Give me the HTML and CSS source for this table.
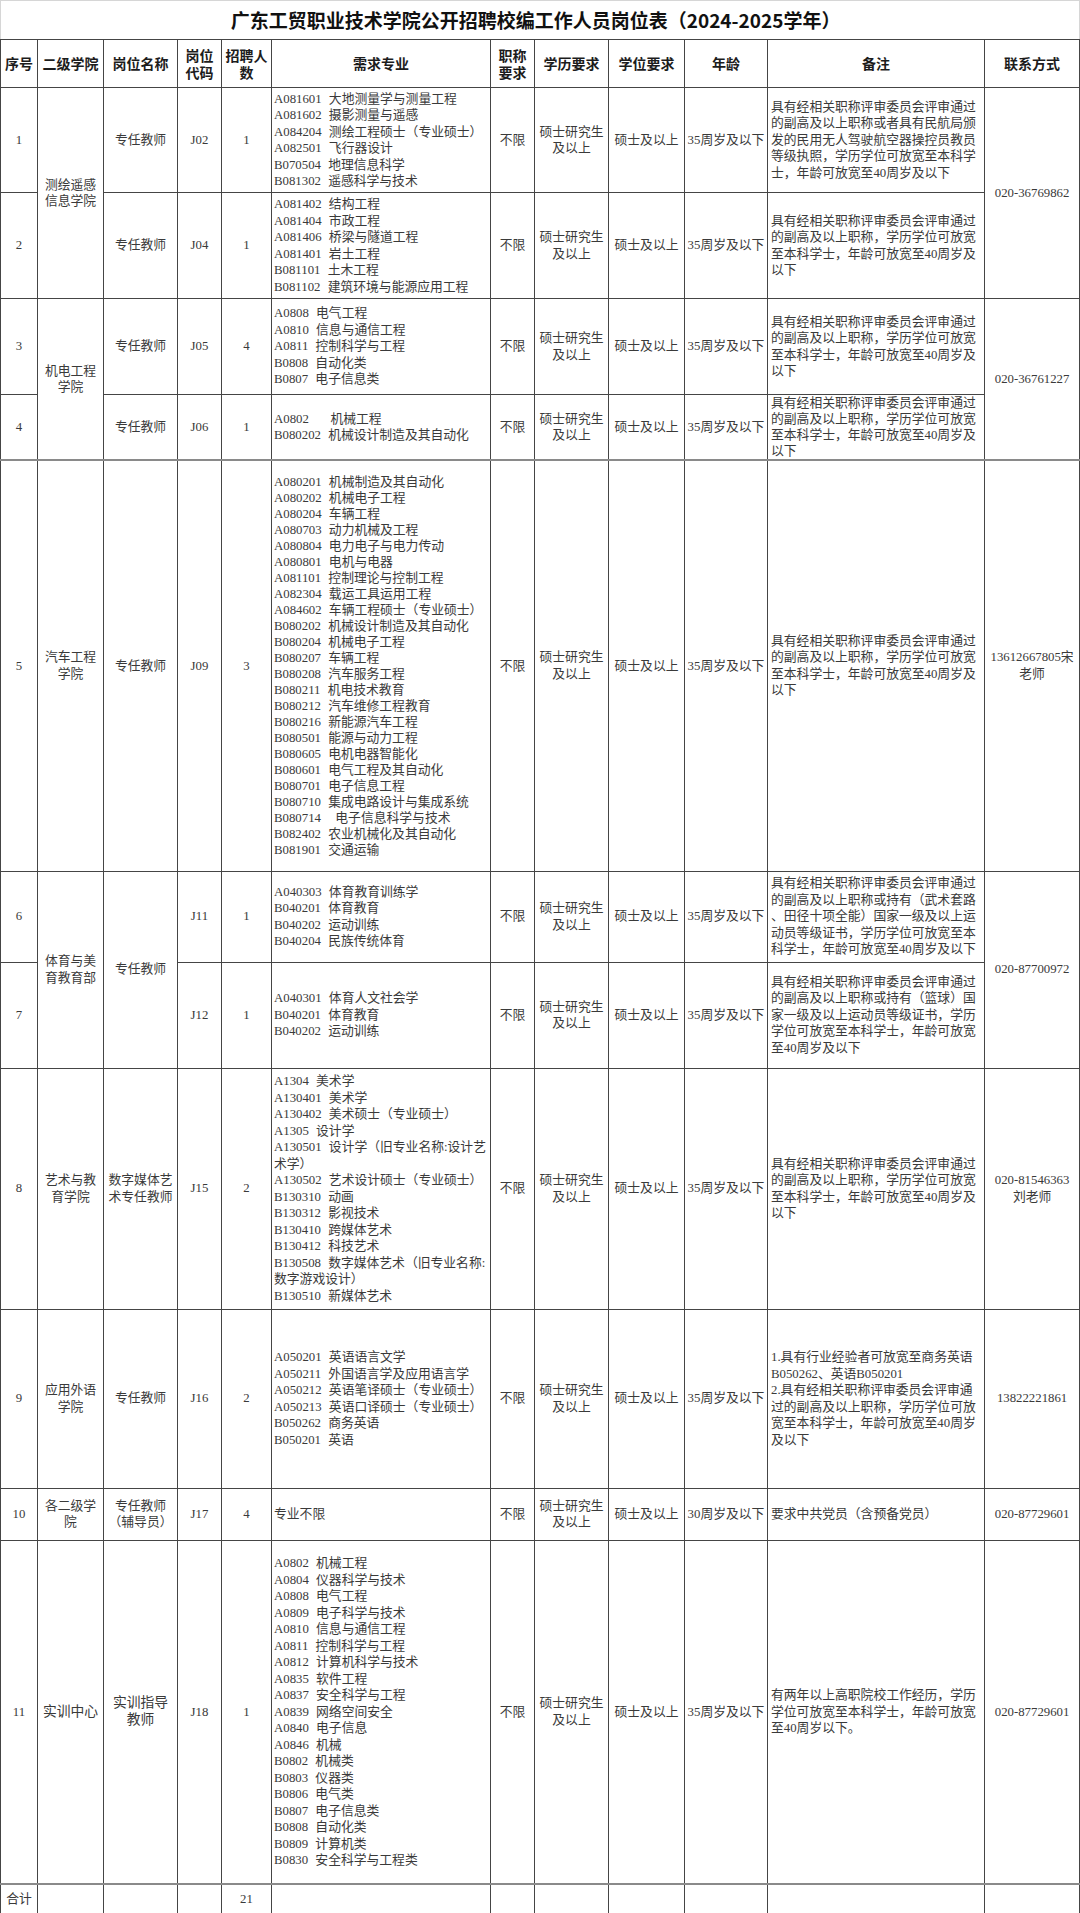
FILE: index.html
```html
<!DOCTYPE html>
<html lang="zh-CN">
<head>
<meta charset="utf-8">
<title>岗位表</title>
<link rel="stylesheet" href="styles.css">
</head>
<body>
<table class="sheet">
  <colgroup>
    <col class="w-no"><col class="w-dept"><col class="w-post"><col class="w-code"><col class="w-num"><col class="w-major"><col class="w-rank"><col class="w-edu"><col class="w-deg"><col class="w-age"><col class="w-note"><col class="w-tel">
  </colgroup>
  <thead>
    <tr class="h-title"><th colspan="12" class="title">广东工贸职业技术学院公开招聘校编工作人员岗位表（2024-2025学年）</th></tr>
    <tr class="h-head">
      <th>序号</th><th>二级学院</th><th>岗位名称</th><th>岗位<br>代码</th><th>招聘人<br>数</th><th>需求专业</th><th>职称<br>要求</th><th class="edu">学历要求</th><th>学位要求</th><th>年龄</th><th>备注</th><th>联系方式</th>
    </tr>
  </thead>
  <tbody>
    <tr class="h-r1">
      <td>1</td>
      <td rowspan="2">测绘遥感<br>信息学院</td>
      <td>专任教师</td><td>J02</td><td>1</td>
      <td class="list">A081601 大地测量学与测量工程<br>A081602 摄影测量与遥感<br>A084204 测绘工程硕士（专业硕士）<br>A082501 飞行器设计<br>B070504 地理信息科学<br>B081302 遥感科学与技术</td>
      <td>不限</td><td class="edu">硕士研究生<br>及以上</td><td>硕士及以上</td><td>35周岁及以下</td>
      <td class="note">具有经相关职称评审委员会评审通过<br>的副高及以上职称或者具有民航局颁<br>发的民用无人驾驶航空器操控员教员<br>等级执照，学历学位可放宽至本科学<br>士，年龄可放宽至40周岁及以下</td>
      <td rowspan="2">020-36769862</td>
    </tr>
    <tr class="h-r2">
      <td>2</td>
      <td>专任教师</td><td>J04</td><td>1</td>
      <td class="list">A081402 结构工程<br>A081404 市政工程<br>A081406 桥梁与隧道工程<br>A081401 岩土工程<br>B081101 土木工程<br>B081102 建筑环境与能源应用工程</td>
      <td>不限</td><td class="edu">硕士研究生<br>及以上</td><td>硕士及以上</td><td>35周岁及以下</td>
      <td class="note">具有经相关职称评审委员会评审通过<br>的副高及以上职称，学历学位可放宽<br>至本科学士，年龄可放宽至40周岁及<br>以下</td>
    </tr>
    <tr class="h-r3">
      <td>3</td>
      <td rowspan="2">机电工程<br>学院</td>
      <td>专任教师</td><td>J05</td><td>4</td>
      <td class="list">A0808 电气工程<br>A0810 信息与通信工程<br>A0811 控制科学与工程<br>B0808 自动化类<br>B0807 电子信息类</td>
      <td>不限</td><td class="edu">硕士研究生<br>及以上</td><td>硕士及以上</td><td>35周岁及以下</td>
      <td class="note">具有经相关职称评审委员会评审通过<br>的副高及以上职称，学历学位可放宽<br>至本科学士，年龄可放宽至40周岁及<br>以下</td>
      <td rowspan="2">020-36761227</td>
    </tr>
    <tr class="h-r4">
      <td>4</td>
      <td>专任教师</td><td>J06</td><td>1</td>
      <td class="list">A0802&nbsp;&nbsp; 机械工程<br>B080202 机械设计制造及其自动化</td>
      <td>不限</td><td class="edu">硕士研究生<br>及以上</td><td>硕士及以上</td><td>35周岁及以下</td>
      <td class="note tight">具有经相关职称评审委员会评审通过<br>的副高及以上职称，学历学位可放宽<br>至本科学士，年龄可放宽至40周岁及<br>以下</td>
    </tr>
    <tr class="h-r5 sep">
      <td>5</td>
      <td>汽车工程<br>学院</td>
      <td>专任教师</td><td>J09</td><td>3</td>
      <td class="list tight">A080201 机械制造及其自动化<br>A080202 机械电子工程<br>A080204 车辆工程<br>A080703 动力机械及工程<br>A080804 电力电子与电力传动<br>A080801 电机与电器<br>A081101 控制理论与控制工程<br>A082304 载运工具运用工程<br>A084602 车辆工程硕士（专业硕士）<br>B080202 机械设计制造及其自动化<br>B080204 机械电子工程<br>B080207 车辆工程<br>B080208 汽车服务工程<br>B080211 机电技术教育<br>B080212 汽车维修工程教育<br>B080216 新能源汽车工程<br>B080501 能源与动力工程<br>B080605 电机电器智能化<br>B080601 电气工程及其自动化<br>B080701 电子信息工程<br>B080710 集成电路设计与集成系统<br>B080714&nbsp; 电子信息科学与技术<br>B082402 农业机械化及其自动化<br>B081901 交通运输</td>
      <td>不限</td><td class="edu">硕士研究生<br>及以上</td><td>硕士及以上</td><td>35周岁及以下</td>
      <td class="note">具有经相关职称评审委员会评审通过<br>的副高及以上职称，学历学位可放宽<br>至本科学士，年龄可放宽至40周岁及<br>以下</td>
      <td>13612667805宋<br>老师</td>
    </tr>
    <tr class="h-r6">
      <td>6</td>
      <td rowspan="2">体育与美<br>育教育部</td>
      <td rowspan="2">专任教师</td><td>J11</td><td>1</td>
      <td class="list">A040303 体育教育训练学<br>B040201 体育教育<br>B040202 运动训练<br>B040204 民族传统体育</td>
      <td>不限</td><td class="edu">硕士研究生<br>及以上</td><td>硕士及以上</td><td>35周岁及以下</td>
      <td class="note">具有经相关职称评审委员会评审通过<br>的副高及以上职称或持有（武术套路<br>、田径十项全能）国家一级及以上运<br>动员等级证书，学历学位可放宽至本<br>科学士，年龄可放宽至40周岁及以下</td>
      <td rowspan="2">020-87700972</td>
    </tr>
    <tr class="h-r7">
      <td>7</td>
      <td>J12</td><td>1</td>
      <td class="list">A040301 体育人文社会学<br>B040201 体育教育<br>B040202 运动训练</td>
      <td>不限</td><td class="edu">硕士研究生<br>及以上</td><td>硕士及以上</td><td>35周岁及以下</td>
      <td class="note">具有经相关职称评审委员会评审通过<br>的副高及以上职称或持有（篮球）国<br>家一级及以上运动员等级证书，学历<br>学位可放宽至本科学士，年龄可放宽<br>至40周岁及以下</td>
    </tr>
    <tr class="h-r8">
      <td>8</td>
      <td>艺术与教<br>育学院</td>
      <td>数字媒体艺<br>术专任教师</td><td>J15</td><td>2</td>
      <td class="list">A1304 美术学<br>A130401 美术学<br>A130402 美术硕士（专业硕士）<br>A1305 设计学<br>A130501 设计学（旧专业名称:设计艺<br>术学）<br>A130502 艺术设计硕士（专业硕士）<br>B130310 动画<br>B130312 影视技术<br>B130410 跨媒体艺术<br>B130412 科技艺术<br>B130508 数字媒体艺术（旧专业名称:<br>数字游戏设计）<br>B130510 新媒体艺术</td>
      <td>不限</td><td class="edu">硕士研究生<br>及以上</td><td>硕士及以上</td><td>35周岁及以下</td>
      <td class="note">具有经相关职称评审委员会评审通过<br>的副高及以上职称，学历学位可放宽<br>至本科学士，年龄可放宽至40周岁及<br>以下</td>
      <td>020-81546363<br>刘老师</td>
    </tr>
    <tr class="h-r9">
      <td>9</td>
      <td>应用外语<br>学院</td>
      <td>专任教师</td><td>J16</td><td>2</td>
      <td class="list">A050201 英语语言文学<br>A050211 外国语言学及应用语言学<br>A050212 英语笔译硕士（专业硕士）<br>A050213 英语口译硕士（专业硕士）<br>B050262 商务英语<br>B050201 英语</td>
      <td>不限</td><td class="edu">硕士研究生<br>及以上</td><td>硕士及以上</td><td>35周岁及以下</td>
      <td class="note">1.具有行业经验者可放宽至商务英语<br>B050262、英语B050201<br>2.具有经相关职称评审委员会评审通<br>过的副高及以上职称，学历学位可放<br>宽至本科学士，年龄可放宽至40周岁<br>及以下</td>
      <td>13822221861</td>
    </tr>
    <tr class="h-r10">
      <td>10</td>
      <td>各二级学<br>院</td>
      <td>专任教师<br>（辅导员）</td><td>J17</td><td>4</td>
      <td class="list">专业不限</td>
      <td>不限</td><td class="edu">硕士研究生<br>及以上</td><td>硕士及以上</td><td>30周岁及以下</td>
      <td class="note">要求中共党员（含预备党员）</td>
      <td>020-87729601</td>
    </tr>
    <tr class="h-r11">
      <td>11</td>
      <td class="big">实训中心</td>
      <td class="big">实训指导<br>教师</td><td>J18</td><td>1</td>
      <td class="list">A0802 机械工程<br>A0804 仪器科学与技术<br>A0808 电气工程<br>A0809 电子科学与技术<br>A0810 信息与通信工程<br>A0811 控制科学与工程<br>A0812 计算机科学与技术<br>A0835 软件工程<br>A0837 安全科学与工程<br>A0839 网络空间安全<br>A0840 电子信息<br>A0846 机械<br>B0802 机械类<br>B0803 仪器类<br>B0806 电气类<br>B0807 电子信息类<br>B0808 自动化类<br>B0809 计算机类<br>B0830 安全科学与工程类</td>
      <td>不限</td><td class="edu">硕士研究生<br>及以上</td><td>硕士及以上</td><td>35周岁及以下</td>
      <td class="note">有两年以上高职院校工作经历，学历<br>学位可放宽至本科学士，年龄可放宽<br>至40周岁以下。</td>
      <td>020-87729601</td>
    </tr>
    <tr class="h-total sep">
      <td>合计</td><td></td><td></td><td></td><td>21</td><td></td><td></td><td></td><td></td><td></td><td></td><td></td>
    </tr>
  </tbody>
</table>
</body>
</html>
```

FILE: styles.css
```css
html, body {
  margin: 0;
  padding: 0;
  background: #ffffff;
}

body {
  font-family: "Liberation Serif", "Noto Sans CJK SC", serif;
  color: #3a3a3a;
}

.sheet {
  border-collapse: collapse;
  table-layout: fixed;
  width: 1079px;
  font-size: 12.8px;
  line-height: 16.5px;
}

.w-no { width: 37px; }
.w-dept { width: 66px; }
.w-post { width: 74px; }
.w-code { width: 44px; }
.w-num { width: 50px; }
.w-major { width: 219px; }
.w-rank { width: 44px; }
.w-edu { width: 74px; }
.w-deg { width: 76px; }
.w-age { width: 83px; }
.w-note { width: 217px; }
.w-tel { width: 95px; }

.sheet th,
.sheet td {
  border: 1px solid #454545;
  padding: 0 1px;
  text-align: center;
  vertical-align: middle;
  white-space: nowrap;
  overflow: visible;
}

.sheet .title {
  font-family: "Noto Sans CJK SC", sans-serif;
  font-size: 19px;
  font-weight: 700;
  color: #111111;
  padding-right: 10px;
  border-top-color: #d6d6d6;
  border-left-color: #d6d6d6;
  border-right-color: #d6d6d6;
}

.h-head th {
  font-family: "Noto Sans CJK SC", sans-serif;
  font-size: 14px;
  font-weight: 700;
  color: #1c1c1c;
  line-height: 17px;
}

.sheet .list {
  text-align: left;
  padding-left: 2px;
  word-spacing: 4px;
}

.sheet .note {
  text-align: left;
  padding-left: 3px;
}

.sheet .tight {
  line-height: 16px;
}

.sheet .big {
  font-size: 13.8px;
}

.sep > td {
  border-top: 2px solid #8a8a8a;
}

.h-title { height: 39px; }
.h-head { height: 48px; }
.h-r1 { height: 105px; }
.h-r2 { height: 106px; }
.h-r3 { height: 96px; }
.h-r4 { height: 65px; }
.h-r5 { height: 411px; }
.h-r6 { height: 91px; }
.h-r7 { height: 106px; }
.h-r8 { height: 241px; }
.h-r9 { height: 179px; }
.h-r10 { height: 52px; }
.h-r11 { height: 344px; }
.h-total { height: 29px; }
```
